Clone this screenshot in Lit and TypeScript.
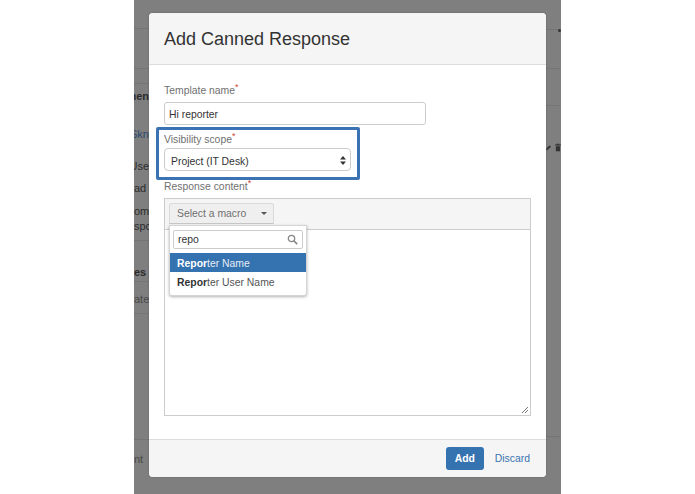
import { LitElement, html, css, svg } from "lit";
import { customElement } from "lit/decorators.js";

@customElement("app-root")
export class AppRoot extends LitElement {
  static styles = css`
    :host {
      display: flex;
      justify-content: center;
      width: 695px;
      height: 494px;
      background: #fff;
      font-family: "Liberation Sans", Arial, sans-serif;
      overflow: hidden;
    }
    .stage {
      position: relative;
      box-sizing: border-box;
      width: 427px;
      height: 494px;
      background: #7f7f7f;
      overflow: hidden;
    }
    .behind {
      position: absolute;
      inset: 0;
      display: grid;
      grid-template-columns: 15px 397px 15px;
    }
    .left {
      position: relative;
      display: flex;
      flex-direction: column;
      align-items: flex-start;
      font-size: 11px;
      line-height: 14px;
      color: #2c2c2c;
      white-space: nowrap;
      padding-top: 89px;
    }
    .left span { display: block; position: relative; }
    .left .end { align-self: flex-end; }
    .left .link { color: #2b4a6e; margin-top: 24px; }
    .left .b { font-weight: 700; }
    .left .use { margin-top: 18px; }
    .left .ad { margin-top: 8px; }
    .left .om { margin-top: 9px; }
    .left .spo { margin-top: 1px; }
    .left .es { margin-top: 32px; }
    .left .ate { margin-top: 13px; color: #4a4a4a; }
    .left .nt { margin-top: 146px; color: #4a4a4a; }
    .rules {
      position: absolute;
      inset: 0;
      display: flex;
      flex-direction: column;
    }
    .rule { flex: none; height: 1px; background: #757575; width: 100%; }
    .right {
      position: relative;
      display: flex;
      flex-direction: column;
      padding-top: 29px;
    }
    .tools {
      display: flex;
      align-items: center;
      gap: 4px;
      margin-top: 37px;
      color: #333;
    }
    .tools svg { display: block; }
    .dot {
      position: absolute;
      left: 12px;
      top: 29px;
      width: 3px;
      height: 3px;
      border-radius: 50%;
      background: #333;
    }
    .modal {
      position: absolute;
      left: 15px;
      top: 13px;
      width: 397px;
      height: 464px;
      display: flex;
      flex-direction: column;
      box-sizing: border-box;
      border-radius: 4px;
      background: #fff;
      overflow: hidden;
      box-shadow: 0 0 2px rgba(0, 0, 0, 0.25);
    }
    header {
      flex: none;
      box-sizing: border-box;
      height: 52px;
      padding: 1px 15px 0;
      display: flex;
      align-items: center;
      background: #f5f5f5;
      border-bottom: 1px solid #dcdcdc;
      font-size: 18px;
      color: #333;
    }
    .body {
      flex: 1;
      padding: 19px 15px 0;
      display: flex;
      flex-direction: column;
      min-height: 0;
    }
    label {
      display: block;
      font-size: 10.4px;
      line-height: 14px;
      color: #707070;
    }
    label sup {
      color: #d04437;
      font-size: 9px;
      line-height: 0;
      vertical-align: 4px;
    }
    .input {
      box-sizing: border-box;
      width: 262px;
      height: 23px;
      margin-top: 4px;
      padding: 2px 4px 0;
      display: flex;
      align-items: center;
      border: 1px solid #cccccc;
      border-radius: 3px;
      font-size: 10.4px;
      color: #333;
    }
    .scope {
      box-sizing: border-box;
      width: 204px;
      height: 53px;
      margin: 2px 0 0 -8px;
      padding: 3px 5px 0;
      border: 3px solid #3b72b4;
      border-radius: 2px;
    }
    .select {
      box-sizing: border-box;
      width: 187px;
      height: 23px;
      margin-top: 1px;
      padding: 3px 4px 0 6px;
      display: flex;
      align-items: center;
      justify-content: space-between;
      border: 1px solid #cccccc;
      border-radius: 4px;
      font-size: 10.4px;
      color: #333;
    }
    .select svg { display: block; margin-top: -2px; }
    .content-label { margin-top: 0; }
    .editor {
      box-sizing: border-box;
      position: relative;
      width: 367px;
      height: 218px;
      margin-top: 4px;
      display: flex;
      flex-direction: column;
      border: 1px solid #cccccc;
    }
    .toolbar {
      flex: none;
      box-sizing: border-box;
      height: 31px;
      padding: 4px 4px 0;
      background: #f5f5f5;
      border-bottom: 1px solid #cccccc;
    }
    .macro {
      box-sizing: border-box;
      width: 105px;
      height: 21px;
      padding: 0 7px;
      display: flex;
      align-items: center;
      justify-content: space-between;
      background: #efefef;
      border: 1px solid #dadada;
      border-bottom-color: #c8c8c8;
      border-radius: 3px 3px 0 0;
      font-size: 10.4px;
      color: #707070;
    }
    .caret {
      width: 0;
      height: 0;
      border-left: 3px solid transparent;
      border-right: 3px solid transparent;
      border-top: 3px solid #555;
      margin-right: -1px;
    }
    .area { flex: 1; position: relative; background: #fff; }
    .grip { position: absolute; right: 1px; bottom: 1px; display: block; }
    .menu {
      position: absolute;
      left: 4px;
      top: 26px;
      box-sizing: border-box;
      width: 138px;
      height: 71px;
      padding-top: 4px;
      background: #fff;
      border: 1px solid #d5d5d5;
      border-radius: 0 0 3px 3px;
      box-shadow: 0 1px 3px rgba(0, 0, 0, 0.3);
    }
    .search {
      box-sizing: border-box;
      width: 130px;
      height: 19px;
      margin: 0 0 4px 3px;
      padding: 0 4px;
      display: flex;
      align-items: center;
      justify-content: space-between;
      border: 1px solid #cccccc;
      border-radius: 2px;
      font-size: 10.4px;
      color: #333;
    }
    .search svg { display: block; }
    .item {
      box-sizing: border-box;
      height: 19px;
      padding: 2px 7px 0;
      display: flex;
      align-items: center;
      font-size: 10.4px;
      color: #555;
      white-space: pre;
    }
    .item b { color: #333; }
    .item.on { background: #3572b0; color: #e6edf5; }
    .item.on b { color: #fff; }
    footer {
      flex: none;
      box-sizing: border-box;
      height: 38px;
      padding: 7px 16px 0 0;
      display: flex;
      justify-content: flex-end;
      align-items: flex-start;
      gap: 11px;
      background: #f5f5f5;
      border-top: 1px solid #dcdcdc;
    }
    .add {
      box-sizing: border-box;
      width: 38px;
      height: 23px;
      display: flex;
      align-items: center;
      justify-content: center;
      background: #3572b0;
      border-radius: 3px;
      color: #fff;
      font-size: 10.4px;
      font-weight: 700;
    }
    .discard {
      height: 23px;
      display: flex;
      align-items: center;
      color: #3b73af;
      font-size: 10.4px;
    }
  `;

  render() {
    const arrows = svg`<path d="M3 0 L6 3.500 H0 Z M0 5.500 H6 L3 9 Z" fill="#333"/>`;
    const leftGaps = [28, 39, 14, 156, 40, 31, 125];
    return html`
      <div class="stage">
        <div class="behind" aria-hidden="true">
          <div class="left">
            <div class="rules">
              ${leftGaps.map((g) => html`<div class="rule" style="margin-top:${g}px"></div>`)}
            </div>
            <span class="b end">men</span>
            <span class="link end">Skn</span>
            <span class="use end">Use</span>
            <span class="ad">ad</span>
            <span class="om">om</span>
            <span class="spo">spo</span>
            <span class="es b">es</span>
            <span class="ate">ate</span>
            <span class="nt">nt</span>
          </div>
          <div></div>
          <div class="right">
            <div class="rule"></div>
            <span class="dot"></span>
            <div class="rule" style="margin-top:38px"></div>
            <div class="rule" style="margin-top:36px"></div>
            <div class="tools">
              <svg width="6" height="7" viewBox="0 0 6 7"><path d="M0 7 L1 4 L4 1 L6 2.500 L2.500 6 Z" fill="#333"/></svg>
              <svg width="7" height="9" viewBox="0 0 7 9"><path d="M2 0 H5 V1 H7 V2 H0 V1 H2 Z M1 3 H6 V9 H1 Z" fill="#333"/></svg>
            </div>
            <div class="rule" style="margin-top:284px"></div>
          </div>
        </div>

        <div class="modal">
          <header>Add Canned Response</header>
          <div class="body">
            <label>Template name<sup>*</sup></label>
            <div class="input">Hi reporter</div>

            <div class="scope">
              <label>Visibility scope<sup>*</sup></label>
              <div class="select">
                <span>Project (IT Desk)</span>
                <svg width="6" height="9" viewBox="0 0 6 9">${arrows}</svg>
              </div>
            </div>

            <label class="content-label">Response content<sup>*</sup></label>
            <div class="editor">
              <div class="toolbar">
                <div class="macro"><span>Select a macro</span><span class="caret"></span></div>
              </div>
              <div class="area">
                <svg class="grip" width="8" height="8" viewBox="0 0 8 8">
                  <path d="M1 7 L7 1 M4 7 L7 4" stroke="#777" stroke-width="1" fill="none"/>
                </svg>
              </div>
              <div class="menu">
                <div class="search">
                  <span>repo</span>
                  <svg width="11" height="11" viewBox="0 0 11 11">
                    <circle cx="4.500" cy="4.500" r="3.200" fill="none" stroke="#888" stroke-width="1.300"/>
                    <path d="M7 7 L10.200 10.200" stroke="#888" stroke-width="1.700"/>
                  </svg>
                </div>
                <div class="item on"><b>Repor</b>ter Name</div>
                <div class="item"><b>Repor</b>ter User Name</div>
              </div>
            </div>
          </div>
          <footer>
            <span class="add">Add</span>
            <span class="discard">Discard</span>
          </footer>
        </div>
      </div>
    `;
  }
}
